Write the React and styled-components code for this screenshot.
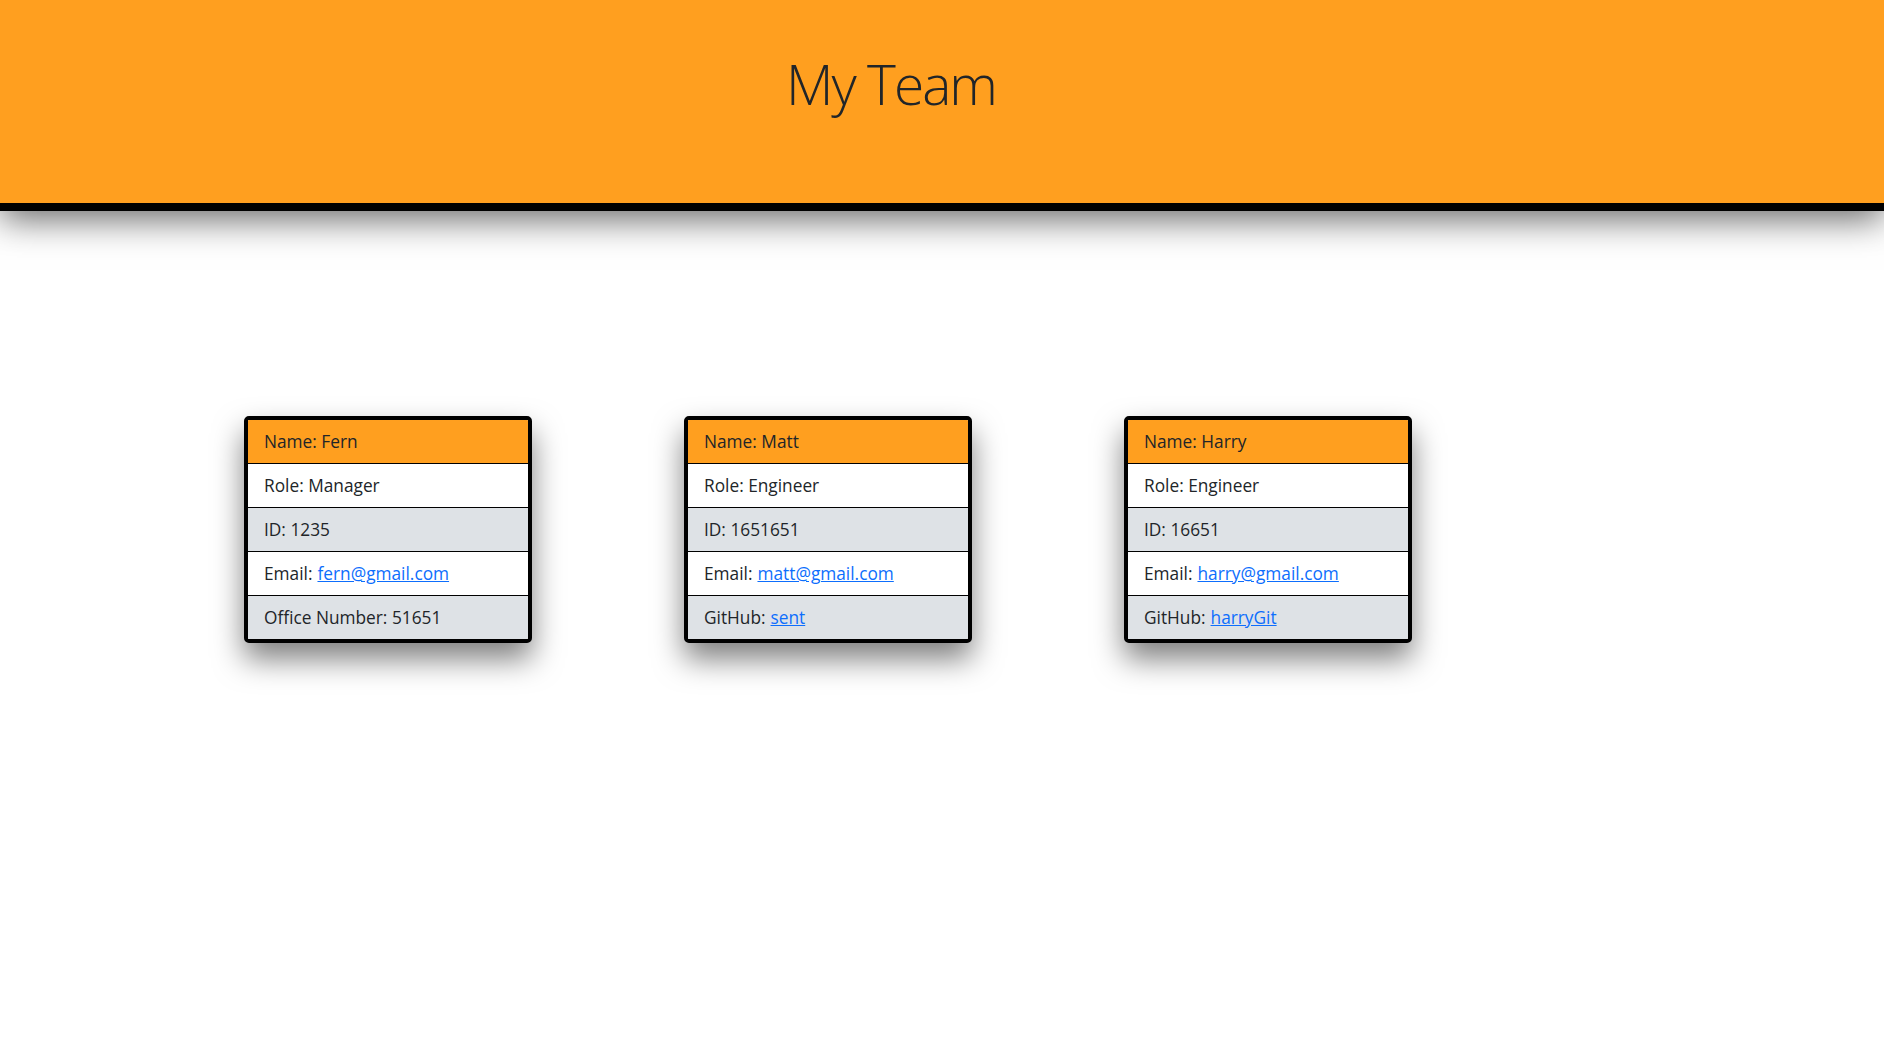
import React from "react";
import styled, { createGlobalStyle } from "styled-components";

const Global = createGlobalStyle`
  html, body { margin: 0; padding: 0; background: #fff; }
  body { font-family: "Open Sans", "Noto Sans", sans-serif; color: #212529; }
  #root { min-height: 100vh; }
  * { box-sizing: border-box; }
`;

const Page = styled.div`
  min-height: 100vh;
  background: #fff;
`;

const Header = styled.header`
  height: 211px;
  background: #ff9f1f;
  border-bottom: 8px solid #000;
  box-shadow: 0 8px 34px rgba(0, 0, 0, 0.6);
  display: flex;
  justify-content: center;
  padding-right: 102px;
  position: relative;
  z-index: 1;
`;

const Title = styled.h1`
  margin: 0;
  padding-top: 46px;
  font-size: 55px;
  font-weight: 300;
  line-height: 76px;
  color: #212529;
  letter-spacing: -2px;
`;

const Main = styled.main`
  display: flex;
  align-items: flex-start;
  gap: 152px;
  padding: 205px 0 200px 244px;
`;

const Card = styled.section`
  width: 288px;
  border: 4px solid #000;
  border-radius: 5px;
  overflow: hidden;
  background: #fff;
  box-shadow: 0 16px 30px rgba(0, 0, 0, 0.5);
`;

const Row = styled.div`
  box-sizing: content-box;
  height: 43px;
  padding: 0 16px;
  display: flex;
  align-items: center;
  font-size: 17.3px;
  background: ${(p) => p.$bg};
  & + & { border-top: 1px solid #000; }
`;

const Link = styled.a`
  color: #0d6efd;
  text-decoration: underline;
  margin-left: 5px;
`;

const bgs = ["#ff9f1f", "#fff", "#dee2e6", "#fff", "#dee2e6"];

const team = [
  { name: "Fern", role: "Manager", id: "1235", email: "fern@gmail.com", extra: ["Office Number:", "51651", false] },
  { name: "Matt", role: "Engineer", id: "1651651", email: "matt@gmail.com", extra: ["GitHub:", "sent", true] },
  { name: "Harry", role: "Engineer", id: "16651", email: "harry@gmail.com", extra: ["GitHub:", "harryGit", true] },
];

export default function App() {
  return (
    <Page>
      <Global />
      <Header>
        <Title>My Team</Title>
      </Header>
      <Main>
        {team.map((m) => (
          <Card key={m.name}>
            <Row $bg={bgs[0]}>Name: {m.name}</Row>
            <Row $bg={bgs[1]}>Role: {m.role}</Row>
            <Row $bg={bgs[2]}>ID: {m.id}</Row>
            <Row $bg={bgs[3]}>
              Email:<Link href={`mailto:${m.email}`}>{m.email}</Link>
            </Row>
            <Row $bg={bgs[4]}>
              {m.extra[0]}
              {m.extra[2] ? <Link href="#">{m.extra[1]}</Link> : <>&nbsp;{m.extra[1]}</>}
            </Row>
          </Card>
        ))}
      </Main>
    </Page>
  );
}
